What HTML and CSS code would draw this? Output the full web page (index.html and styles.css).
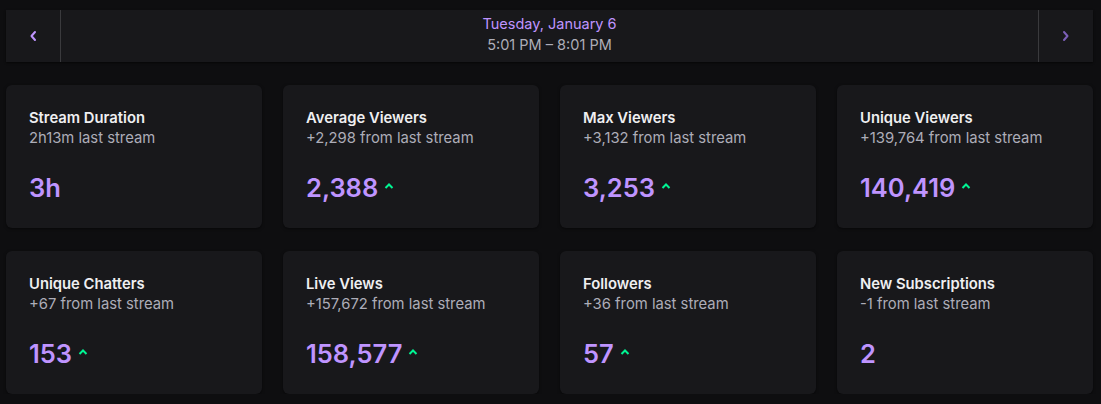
FILE: index.html
```html
<!DOCTYPE html>
<html>
<head>
<meta charset="utf-8">
<link rel="stylesheet" href="styles.css">
</head>
<body>
<div class="page">
  <div class="datebar">
    <button class="nav nav-prev" aria-label="Previous">
      <svg width="8" height="12" viewBox="0 0 8 12"><path d="M6 2 L2.5 6 L6 10" fill="none" stroke="currentColor" stroke-width="2" stroke-linecap="round" stroke-linejoin="round"/></svg>
    </button>
    <div class="date">
      <div class="date-day">Tuesday, January 6</div>
      <div class="date-time">5:01 PM – 8:01 PM</div>
    </div>
    <button class="nav nav-next" aria-label="Next">
      <svg width="8" height="12" viewBox="0 0 8 12"><path d="M2 2 L5.5 6 L2 10" fill="none" stroke="currentColor" stroke-width="2" stroke-linecap="round" stroke-linejoin="round"/></svg>
    </button>
  </div>

  <div class="grid">
    <div class="card"><div class="title">Stream Duration</div><div class="sub">2h13m last stream</div><div class="value">3h</div></div>
    <div class="card"><div class="title">Average Viewers</div><div class="sub">+2,298 from last stream</div><div class="value">2,388<svg class="up" width="10" height="6" viewBox="0 0 10 6"><path d="M1.5 5 L5 1.5 L8.5 5" fill="none" stroke="currentColor" stroke-width="2"/></svg></div></div>
    <div class="card"><div class="title">Max Viewers</div><div class="sub">+3,132 from last stream</div><div class="value">3,253<svg class="up" width="10" height="6" viewBox="0 0 10 6"><path d="M1.5 5 L5 1.5 L8.5 5" fill="none" stroke="currentColor" stroke-width="2"/></svg></div></div>
    <div class="card"><div class="title">Unique Viewers</div><div class="sub">+139,764 from last stream</div><div class="value">140,419<svg class="up" width="10" height="6" viewBox="0 0 10 6"><path d="M1.5 5 L5 1.5 L8.5 5" fill="none" stroke="currentColor" stroke-width="2"/></svg></div></div>
    <div class="card"><div class="title">Unique Chatters</div><div class="sub">+67 from last stream</div><div class="value">153<svg class="up" width="10" height="6" viewBox="0 0 10 6"><path d="M1.5 5 L5 1.5 L8.5 5" fill="none" stroke="currentColor" stroke-width="2"/></svg></div></div>
    <div class="card"><div class="title">Live Views</div><div class="sub">+157,672 from last stream</div><div class="value">158,577<svg class="up" width="10" height="6" viewBox="0 0 10 6"><path d="M1.5 5 L5 1.5 L8.5 5" fill="none" stroke="currentColor" stroke-width="2"/></svg></div></div>
    <div class="card"><div class="title">Followers</div><div class="sub">+36 from last stream</div><div class="value">57<svg class="up" width="10" height="6" viewBox="0 0 10 6"><path d="M1.5 5 L5 1.5 L8.5 5" fill="none" stroke="currentColor" stroke-width="2"/></svg></div></div>
    <div class="card"><div class="title">New Subscriptions</div><div class="sub">-1 from last stream</div><div class="value">2</div></div>
  </div>
</div>
</body>
</html>
```

FILE: styles.css
```css
* { box-sizing: border-box; }
html, body {
  margin: 0;
  background: #0e0e10;
  font-family: Inter, "Noto Sans", "Liberation Sans", sans-serif;
  color: #efeff1;
}
.page {
  padding: 10px 8px 0 6px;
}
.datebar {
  display: flex;
  height: 52px;
  background: #18181b;
  box-shadow: 0 1px 2px rgba(0,0,0,0.6);
}
.nav {
  width: 55px;
  flex: none;
  background: transparent;
  border: none;
  display: flex;
  align-items: center;
  justify-content: center;
  padding: 0;
  color: #bf94ff;
}
.nav-prev { border-right: 1px solid #3a3a3d; }
.nav-next { border-left: 1px solid #3a3a3d; color: #7c5fb8; }
.date {
  flex: 1;
  display: flex;
  flex-direction: column;
  align-items: center;
  justify-content: center;
  padding-bottom: 5px;
  font-size: 14.5px;
  line-height: 21px;
}
.date-day { color: #bf94ff; }
.date-time { color: #adadb8; }
.grid {
  margin-top: 23px;
  display: grid;
  grid-template-columns: repeat(4, 1fr);
  column-gap: 21px;
  row-gap: 23px;
}
.card {
  background: #18181b;
  border-radius: 6px;
  box-shadow: 0 1px 3px rgba(0,0,0,0.5);
  padding: 23px 22px 23px 23px;
  height: 143px;
}
.title {
  font-size: 14.8px;
  font-weight: 600;
  line-height: 20px;
  color: #efeff1;
}
.sub {
  font-size: 14.8px;
  line-height: 20px;
  color: #adadb8;
}
.value {
  margin-top: 24px;
  font-size: 25.5px;
  font-weight: 600;
  line-height: 32px;
  color: #bf94ff;
  display: flex;
  align-items: center;
}
.up {
  color: #00f593;
  margin-left: 6px;
  margin-top: -4px;
}
```
